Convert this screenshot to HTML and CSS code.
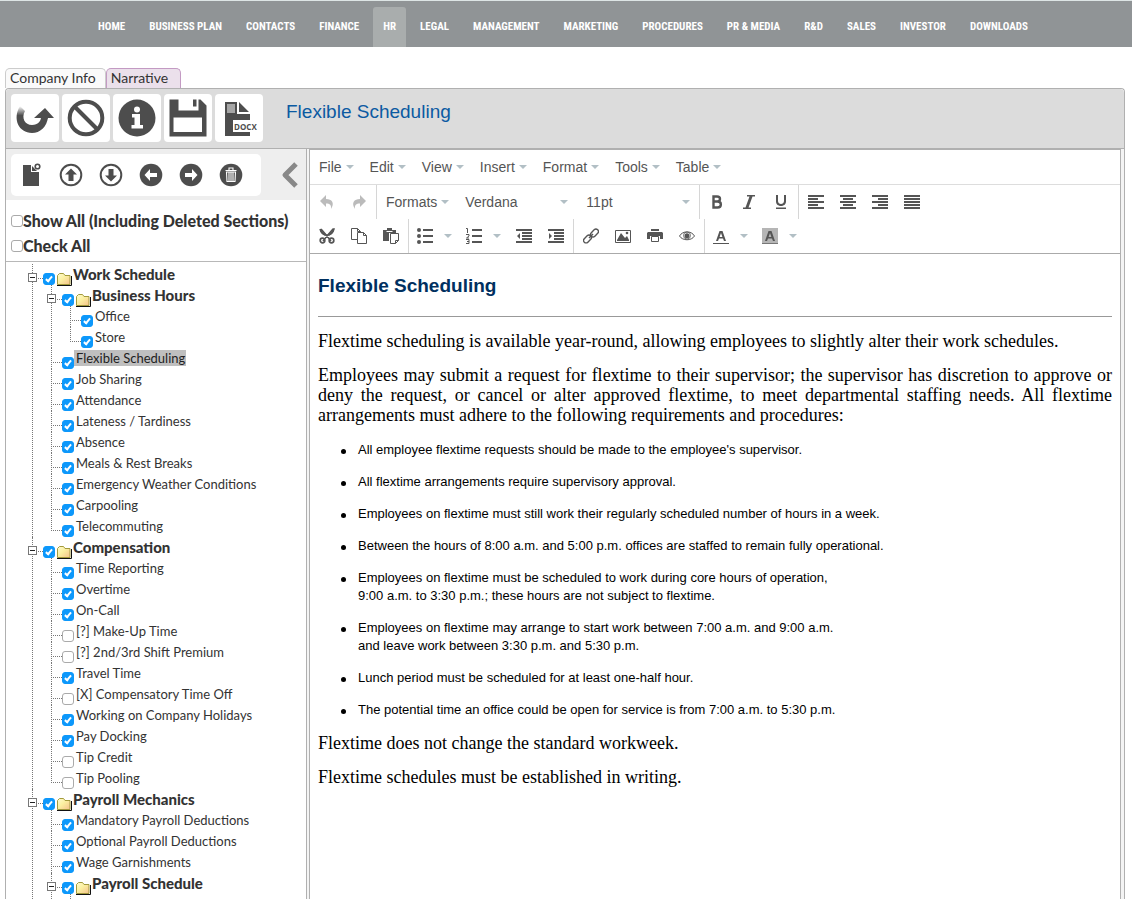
FILE: index.html
```
<!DOCTYPE html>
<html lang="en">
<head>
<meta charset="utf-8">
<title>Flexible Scheduling</title>
<link rel="stylesheet" href="styles.css">
</head>
<body>
<nav class="topnav">
  <a href="#">HOME</a><a href="#">BUSINESS PLAN</a><a href="#">CONTACTS</a><a href="#">FINANCE</a><a href="#" class="active">HR</a><a href="#">LEGAL</a><a href="#">MANAGEMENT</a><a href="#">MARKETING</a><a href="#">PROCEDURES</a><a href="#">PR &amp; MEDIA</a><a href="#">R&amp;D</a><a href="#">SALES</a><a href="#">INVESTOR</a><a href="#">DOWNLOADS</a>
</nav>
<main class="page">
  <div class="tabs"><a href="#" class="tab">Company Info</a><a href="#" class="tab current">Narrative</a></div>
  <div class="app">
    <header class="app-head">
      <button class="big" aria-label="Revert"><svg width="48" height="48" viewBox="0 0 48 48"><defs><linearGradient id="fade" x1="0" y1="0" x2="0" y2="1"><stop offset="0" stop-color="#4d4d4d" stop-opacity="0"/><stop offset=".35" stop-color="#4d4d4d"/></linearGradient></defs><path d="M9 12l5 5c-4 7 0 14 7 14 6 0 9-4 9-8h7c-1 10-8 16-16 16C8 39 1 25 9 12z" fill="url(#fade)"/><path d="M23 24l11-10 9 10h-6l-2 3h-5v-3z" fill="#4d4d4d"/></svg></button>
      <button class="big" aria-label="Cancel"><svg width="48" height="48" viewBox="0 0 48 48" fill="none" stroke="#4d4d4d" stroke-width="4"><circle cx="24" cy="24" r="16.300"/><path d="M12.500 12.500l23 23"/></svg></button>
      <button class="big" aria-label="Information"><svg width="48" height="48" viewBox="0 0 48 48"><circle cx="24" cy="24" r="18.500" fill="#4d4d4d"/><circle cx="24" cy="15.500" r="3" fill="#fff"/><path d="M19 20h8v11h3v3.500H18.500V31h3v-7.500H19z" fill="#fff"/></svg></button>
      <button class="big" aria-label="Save"><svg width="48" height="48" viewBox="0 0 48 48"><path d="M5.500 5.500h9v11h20v-11h2l6 6v31h-37z" fill="#4d4d4d"/><path d="M29 5.500h3.500v7H29z" fill="#4d4d4d"/><path d="M9.500 23.500h28.500v14.500H9.500z" fill="#fff"/></svg></button>
      <button class="big" aria-label="Export DOCX"><svg width="48" height="48" viewBox="0 0 48 48"><path d="M10 8h12v12h13v6H18v12h17v4H10zM24 8l10 10H24z" fill="#4d4d4d"/><path d="M12 10h8v9h-8z" fill="#a6a6a6"/><text x="19" y="36" class="docx">DOCX</text></svg></button>
      <h1>Flexible Scheduling</h1>
    </header>
    <div class="panes">
      <aside class="side">
        <div class="side-bar">
          <div class="side-tools">
            <button aria-label="Add section"><svg width="24" height="24" viewBox="0 0 24 24"><path d="M4 2h8v7h8v14H4z" fill="#4d4d4d"/><path d="M13 3l5 5h-5z" fill="#4d4d4d"/><circle cx="18.500" cy="3.500" r="2.300" fill="#fff" stroke="#4d4d4d" stroke-width="1.600"/></svg></button>
            <button aria-label="Move up"><svg width="24" height="24" viewBox="0 0 24 24"><circle cx="12" cy="12" r="10.300" fill="none" stroke="#4d4d4d" stroke-width="2"/><path d="M12 5.500l6 6h-3.500V18h-5v-6.500H6z" fill="#4d4d4d"/></svg></button>
            <button aria-label="Move down"><svg width="24" height="24" viewBox="0 0 24 24"><circle cx="12" cy="12" r="10.300" fill="none" stroke="#4d4d4d" stroke-width="2"/><path d="M12 18.500l6-6h-3.500V6h-5v6.500H6z" fill="#4d4d4d"/></svg></button>
            <button aria-label="Move left"><svg width="24" height="24" viewBox="0 0 24 24"><circle cx="12" cy="12" r="11.300" fill="#4d4d4d"/><path d="M5.500 12l5.500-6v4h7v4h-7v4z" fill="#fff"/></svg></button>
            <button aria-label="Move right"><svg width="24" height="24" viewBox="0 0 24 24"><circle cx="12" cy="12" r="11.300" fill="#4d4d4d"/><path d="M18.500 12l-5.500-6v4H6v4h7v4z" fill="#fff"/></svg></button>
            <button aria-label="Delete"><svg width="24" height="24" viewBox="0 0 24 24"><circle cx="12" cy="12" r="11.300" fill="#4d4d4d"/><path d="M7.500 9h9l-.5 9.500H8zM6.500 7.500h11M10 7V5h4v2M10 9v9M12 9v9M14 9v9" fill="none" stroke="#fff" stroke-width="1.100"/></svg></button>
          </div>
          <button class="collapse" aria-label="Collapse sidebar"><svg width="18" height="28" viewBox="0 0 18 28"><path d="M15 3L4 14l11 11" fill="none" stroke="#888" stroke-width="5" stroke-linejoin="round"/></svg></button>
        </div>
        <div class="filters">
          <label><input type="checkbox">Show All (Including Deleted Sections)</label>
          <label><input type="checkbox">Check All</label>
        </div>
        <svg class="defs" width="0" height="0"><defs>
          <linearGradient id="paper" x1="0" y1="0" x2="1" y2="1"><stop offset="0" stop-color="#fffbd0"/><stop offset=".45" stop-color="#fbf0a0"/><stop offset="1" stop-color="#f4c08c"/></linearGradient>
          <symbol id="folder" viewBox="0 0 16 14"><path d="M1.500 12.500v-9l2-2h4l1.500 2h5v9z" fill="url(#paper)" stroke="#a39a3c"/><path d="M1 13.500h14.500V4" fill="none" stroke="#111"/></symbol>
        </defs></svg>
        <ul class="tree">
          <li><div class="row"><button class="toggle" aria-label="Collapse"></button><label><input type="checkbox" checked><svg class="folder"><use href="#folder"/></svg><b>Work Schedule</b></label></div>
            <ul>
              <li><div class="row"><button class="toggle" aria-label="Collapse"></button><label><input type="checkbox" checked><svg class="folder"><use href="#folder"/></svg><b>Business Hours</b></label></div>
                <ul>
                  <li><div class="row"><label><input type="checkbox" checked><span>Office</span></label></div></li>
                  <li><div class="row"><label><input type="checkbox" checked><span>Store</span></label></div></li>
                </ul>
              </li>
              <li><div class="row"><label><input type="checkbox" checked><span class="selected">Flexible Scheduling</span></label></div></li>
              <li><div class="row"><label><input type="checkbox" checked><span>Job Sharing</span></label></div></li>
              <li><div class="row"><label><input type="checkbox" checked><span>Attendance</span></label></div></li>
              <li><div class="row"><label><input type="checkbox" checked><span>Lateness / Tardiness</span></label></div></li>
              <li><div class="row"><label><input type="checkbox" checked><span>Absence</span></label></div></li>
              <li><div class="row"><label><input type="checkbox" checked><span>Meals &amp; Rest Breaks</span></label></div></li>
              <li><div class="row"><label><input type="checkbox" checked><span>Emergency Weather Conditions</span></label></div></li>
              <li><div class="row"><label><input type="checkbox" checked><span>Carpooling</span></label></div></li>
              <li><div class="row"><label><input type="checkbox" checked><span>Telecommuting</span></label></div></li>
            </ul>
          </li>
          <li><div class="row"><button class="toggle" aria-label="Collapse"></button><label><input type="checkbox" checked><svg class="folder"><use href="#folder"/></svg><b>Compensation</b></label></div>
            <ul>
              <li><div class="row"><label><input type="checkbox" checked><span>Time Reporting</span></label></div></li>
              <li><div class="row"><label><input type="checkbox" checked><span>Overtime</span></label></div></li>
              <li><div class="row"><label><input type="checkbox" checked><span>On-Call</span></label></div></li>
              <li><div class="row"><label><input type="checkbox"><span>[?] Make-Up Time</span></label></div></li>
              <li><div class="row"><label><input type="checkbox"><span>[?] 2nd/3rd Shift Premium</span></label></div></li>
              <li><div class="row"><label><input type="checkbox" checked><span>Travel Time</span></label></div></li>
              <li><div class="row"><label><input type="checkbox"><span>[X] Compensatory Time Off</span></label></div></li>
              <li><div class="row"><label><input type="checkbox" checked><span>Working on Company Holidays</span></label></div></li>
              <li><div class="row"><label><input type="checkbox" checked><span>Pay Docking</span></label></div></li>
              <li><div class="row"><label><input type="checkbox"><span>Tip Credit</span></label></div></li>
              <li><div class="row"><label><input type="checkbox"><span>Tip Pooling</span></label></div></li>
            </ul>
          </li>
          <li class="more"><div class="row"><button class="toggle" aria-label="Collapse"></button><label><input type="checkbox" checked><svg class="folder"><use href="#folder"/></svg><b>Payroll Mechanics</b></label></div>
            <ul>
              <li><div class="row"><label><input type="checkbox" checked><span>Mandatory Payroll Deductions</span></label></div></li>
              <li><div class="row"><label><input type="checkbox" checked><span>Optional Payroll Deductions</span></label></div></li>
              <li><div class="row"><label><input type="checkbox" checked><span>Wage Garnishments</span></label></div></li>
              <li class="more"><div class="row"><button class="toggle" aria-label="Collapse"></button><label><input type="checkbox" checked><svg class="folder"><use href="#folder"/></svg><b>Payroll Schedule</b></label></div>
                <ul><li class="more"><div class="row"></div></li></ul>
              </li>
            </ul>
          </li>
        </ul>
      </aside>
      <section class="editor">
        <div class="menubar">
          <button>File<i class="caret"></i></button><button>Edit<i class="caret"></i></button><button>View<i class="caret"></i></button><button>Insert<i class="caret"></i></button><button>Format<i class="caret"></i></button><button>Tools<i class="caret"></i></button><button>Table<i class="caret"></i></button>
        </div>
        <div class="toolbar">
          <div class="set">
            <button class="tool faint" aria-label="Undo"><svg viewBox="0 0 16 16"><path d="M7 1v4c6 0 9 4 5 10 .5-4-1-5.500-5-5.500V13L1 7z"/></svg></button>
            <button class="tool faint" aria-label="Redo"><svg viewBox="0 0 16 16"><path d="M9 1v4C3 5 0 9 4 15c-.5-4 1-5.500 5-5.500V13l6-6z"/></svg></button>
          </div>
          <div class="set">
            <button class="pick">Formats<i class="caret"></i></button>
            <button class="pick font">Verdana<i class="caret"></i></button>
            <button class="pick size">11pt<i class="caret"></i></button>
          </div>
          <div class="set">
            <button class="tool" aria-label="Bold"><svg viewBox="0 0 16 16"><path d="M4.500 2.500H8c4 0 4 5 0 5H4.500zm0 5h4c4.500 0 4.500 6 0 6h-4z" fill="none" stroke="#555" stroke-width="2.400"/></svg></button>
            <button class="tool" aria-label="Italic"><svg viewBox="0 0 16 16"><path d="M6 1h8v1.500h-2.500L7.500 13.500H10V15H2v-1.500h2.500L8.500 2.500H6z"/></svg></button>
            <button class="tool" aria-label="Underline"><svg viewBox="0 0 16 16"><path d="M3 1h2v6c0 4 6 4 6 0V1h2v6.500c0 6-10 6-10 0zM3 13.500h10V15H3z"/></svg></button>
          </div>
          <div class="set">
            <button class="tool" aria-label="Align left"><svg viewBox="0 0 16 16"><path d="M0 1h16v2H0zm0 3h10v2H0zm0 3h16v2H0zm0 3h10v2H0zm0 3h16v2H0z"/></svg></button>
            <button class="tool" aria-label="Align center"><svg viewBox="0 0 16 16"><path d="M0 1h16v2H0zm3 3h10v2H3zM0 7h16v2H0zm3 3h10v2H3zm-3 3h16v2H0z"/></svg></button>
            <button class="tool" aria-label="Align right"><svg viewBox="0 0 16 16"><path d="M0 1h16v2H0zm6 3h10v2H6zM0 7h16v2H0zm6 3h10v2H6zm-6 3h16v2H0z"/></svg></button>
            <button class="tool" aria-label="Justify"><svg viewBox="0 0 16 16"><path d="M0 1h16v2H0zm0 3h16v2H0zm0 3h16v2H0zm0 3h16v2H0zm0 3h16v2H0z"/></svg></button>
          </div>
        </div>
        <div class="toolbar">
          <div class="set">
            <button class="tool" aria-label="Cut"><svg viewBox="0 0 16 16"><path d="M1 1c1 4 4 6 7 6s6-2 7-6l-1 0C12 3 4 13 4 13M2 1c2 2 10 12 10 12" fill="none" stroke="#555" stroke-width="1.500"/><path d="M1 1c0 4 4 7 7 7s7-3 7-7L8 7z"/><circle cx="3.500" cy="12.500" r="2.300" fill="none" stroke="#555" stroke-width="1.700"/><circle cx="12.500" cy="12.500" r="2.300" fill="none" stroke="#555" stroke-width="1.700"/></svg></button>
            <button class="tool" aria-label="Copy"><svg viewBox="0 0 16 16"><path d="M6 11.500H.5v-11h6l3 3V5M6.500.5v3h3M6.500 4.500h6l3 3v8h-9zM12.500 4.500v3h3" fill="none" stroke="#555"/></svg></button>
            <button class="tool" aria-label="Paste"><svg viewBox="0 0 16 16"><path d="M0 2h4V0h5v2h4v3H6v8H0z"/><path d="M3.500 3.500h6" stroke="#fff"/><path d="M7.500 5.500h8v7l-3 3h-5zM15.500 12.500h-3v3" fill="#fff" stroke="#555"/></svg></button>
          </div>
          <div class="set">
            <button class="tool split" aria-label="Bullet list"><svg viewBox="0 0 16 16"><circle cx="2" cy="2" r="2"/><circle cx="2" cy="8" r="2"/><circle cx="2" cy="14" r="2"/><path d="M6 1h10v2H6zm0 6h10v2H6zm0 6h10v2H6z"/></svg><i class="caret"></i></button>
            <button class="tool split" aria-label="Numbered list"><svg viewBox="0 0 16 16"><path d="M6 1h10v2H6zm0 6h10v2H6zm0 6h10v2H6z"/><path d="M0 .5h1.500V5M0 6.500h3v1.500L.5 10H3M0 11.500h3v4H0M1 13.500h2" fill="none" stroke="#555"/></svg><i class="caret"></i></button>
            <button class="tool" aria-label="Outdent"><svg viewBox="0 0 16 16"><path d="M0 1h16v2H0zm6 3h10v2H6zm0 3h10v2H6zm0 3h10v2H6zm-6 3h16v2H0zM4 5v6L1 8z"/></svg></button>
            <button class="tool" aria-label="Indent"><svg viewBox="0 0 16 16"><path d="M0 1h16v2H0zm6 3h10v2H6zm0 3h10v2H6zm0 3h10v2H6zm-6 3h16v2H0zM1 5v6l3-3z"/></svg></button>
          </div>
          <div class="set">
            <button class="tool" aria-label="Link"><svg viewBox="0 0 16 16"><g fill="none" stroke="#555" stroke-width="1.400"><rect x="7" y="2.500" width="9" height="5" rx="2.500" transform="rotate(-45 11.500 5)"/><rect x="0" y="8.500" width="9" height="5" rx="2.500" transform="rotate(-45 4.500 11)"/><path d="M6 10l4-4"/></g></svg></button>
            <button class="tool" aria-label="Image"><svg viewBox="0 0 16 16"><path d="M.5 2.500h15v12H.5z" fill="none" stroke="#555"/><path d="M2 12l4-7 4 5 2-2 2 4v1H2z"/><circle cx="12" cy="5" r="1.300"/></svg></button>
            <button class="tool" aria-label="Print"><svg viewBox="0 0 16 16"><path d="M4 1h8v2H4zM1 4h14l1 1v6h-3V8H3v3H0V5z"/><path d="M4.500 8.500h7v5h-7z" fill="none" stroke="#555"/></svg></button>
            <button class="tool" aria-label="Preview"><svg viewBox="0 0 16 16"><path d="M.5 8C3.500 2.500 12.500 2.500 15.500 8c-3 5-12 5-15 0z" fill="none" stroke="#555"/><circle cx="8" cy="7.800" r="2.500"/><circle cx="8" cy="7.500" r="3.500" fill="none" stroke="#555" stroke-width=".8"/></svg></button>
          </div>
          <div class="set">
            <button class="tool split" aria-label="Text color"><svg viewBox="0 0 16 16"><path d="M6.500 3h3L13 13h-2l-1-2.500H6L5 13H3zM8 5L6.600 9h2.800zM0 15h16v1H0z"/></svg><i class="caret"></i></button>
            <button class="tool split" aria-label="Background color"><svg viewBox="0 0 16 16"><path d="M0 0h16v16H0z" fill="#b5b5b5"/><path d="M6.500 3h3L13 13h-2l-1-2.500H6L5 13H3zM8 5L6.600 9h2.800z"/><path d="M0 15h16v1H0z" fill="#777"/></svg><i class="caret"></i></button>
          </div>
        </div>
        <article class="doc">
          <h2>Flexible Scheduling</h2>
          <hr>
          <p>Flextime scheduling is available year-round, allowing employees to slightly alter their work schedules.</p>
          <p class="justify">Employees may submit a request for flextime to their supervisor; the supervisor has discretion to approve or deny the request, or cancel or alter approved flextime, to meet departmental staffing needs. All flextime arrangements must adhere to the following requirements and procedures:</p>
          <ul>
            <li><span>All employee flextime requests should be made to the employee's supervisor.</span></li>
            <li><span>All flextime arrangements require supervisory approval.</span></li>
            <li><span>Employees on flextime must still work their regularly scheduled number of hours in a week.</span></li>
            <li><span>Between the hours of 8:00 a.m. and 5:00 p.m. offices are staffed to remain fully operational.</span></li>
            <li><span>Employees on flextime must be scheduled to work during core hours of operation,<br>9:00 a.m. to 3:30 p.m.; these hours are not subject to flextime.</span></li>
            <li><span>Employees on flextime may arrange to start work between 7:00 a.m. and 9:00 a.m.<br>and leave work between 3:30 p.m. and 5:30 p.m.</span></li>
            <li><span>Lunch period must be scheduled for at least one-half hour.</span></li>
            <li><span>The potential time an office could be open for service is from 7:00 a.m. to 5:30 p.m.</span></li>
          </ul>
          <p>Flextime does not change the standard workweek.</p>
          <p>Flextime schedules must be established in writing.</p>
        </article>
      </section>
    </div>
  </div>
</main>
</body>
</html>
```

FILE: styles.css
```
* { box-sizing: border-box; }
body {
  margin: 0;
  height: 100vh;
  overflow: hidden;
  display: flex;
  flex-direction: column;
  background: #fff;
  font-family: Lato, sans-serif;
  color: #333;
}
button {
  border: 0;
  padding: 0;
  margin: 0;
  background: none;
  font: inherit;
  color: inherit;
  display: flex;
  align-items: center;
  justify-content: center;
}
svg { display: block; flex: none; }

.topnav {
  flex: none;
  height: 47px;
  display: flex;
  justify-content: center;
  align-items: flex-end;
  gap: 4px;
  padding-right: 6px;
  background: #909496;
  border-top: 1px solid #dde5e5;
}
.topnav a {
  height: 40px;
  padding: 0 10px;
  font: bold 11px/40px "Roboto Condensed", "Liberation Sans Narrow", "Liberation Sans", sans-serif;
  color: #fff;
  text-decoration: none;
  white-space: nowrap;
}
.topnav .active { background: #a9adad; border-radius: 3px 3px 0 0; }

.page {
  flex: 1;
  min-height: 0;
  display: flex;
  flex-direction: column;
  padding: 21px 7px 0 5px;
}
.tabs { display: flex; flex: none; }
.tab {
  height: 20px;
  padding: 0 9px 0 4px;
  border: 1px solid #ccc;
  border-bottom: 0;
  border-radius: 5px 5px 0 0;
  font-size: 14px;
  line-height: 18px;
  color: #333;
  text-decoration: none;
  background: #fafafa;
}
.tab.current { padding-right: 12px; background: #ebe0eb; border-color: #c39ac3; }

.app {
  flex: 1;
  min-height: 0;
  display: flex;
  flex-direction: column;
  border: 1px solid #b0b0b0;
  border-bottom: 0;
  border-radius: 4px 4px 0 0;
}
.app-head {
  flex: none;
  display: flex;
  gap: 3px;
  padding: 5px;
  height: 60px;
  background: #dcdcdc;
  border-bottom: 1px solid #b0b0b0;
  border-radius: 4px 4px 0 0;
}
.big {
  width: 48px;
  height: 48px;
  background: #fff;
  border-radius: 4px;
}
.docx { font: bold 8px "Open Sans", sans-serif; fill: #4d4d4d; }
h1 {
  margin: 0 0 0 20px;
  font: 19px/36px "Liberation Sans", sans-serif;
  color: #0b5aa2;
}

.panes { flex: 1; min-height: 0; display: flex; gap: 2px; padding-right: 3px; background: #f4f4f4; }
.side {
  flex: 0 0 301px;
  display: flex;
  flex-direction: column;
  overflow: hidden;
  background: #fff;
  border-right: 1px solid #b0b0b0;
}
.side-bar {
  flex: none;
  height: 51px;
  display: flex;
  justify-content: space-between;
  align-items: center;
  padding: 0 7px 0 5px;
  background: #eee;
}
.side-tools {
  height: 42px;
  width: 250px;
  display: flex;
  align-items: center;
  gap: 16px;
  padding-left: 8px;
  background: #fff;
  border-radius: 5px;
}
.filters {
  flex: none;
  display: flex;
  flex-direction: column;
  padding: 8px 5px 3px;
  border-bottom: 1px solid #b8b8b8;
}
.filters label {
  display: flex;
  align-items: center;
  height: 25px;
  font-size: 16px;
  line-height: 20px;
  font-weight: 900;
  white-space: nowrap;
}
input[type="checkbox"] {
  appearance: none;
  flex: none;
  position: relative;
  margin: 0;
  width: 12px;
  height: 12px;
  border: 1px solid #aaa;
  border-radius: 3px;
  background: #fff;
}
input[type="checkbox"]:checked { background: #0d98fb; border-color: #0d98fb; }
input[type="checkbox"]:checked::after {
  content: "";
  position: absolute;
  left: 3px;
  top: 1px;
  width: 2px;
  height: 5px;
  border: solid #fff;
  border-width: 0 2px 2px 0;
  transform: rotate(40deg);
}

.defs { position: absolute; }
.tree, .tree ul { list-style: none; margin: 0; padding: 0; }
.tree { padding: 2px 0 0 26px; }
.tree ul { padding-left: 19px; }
.tree li { position: relative; }
.tree li::before {
  content: "";
  position: absolute;
  left: 0;
  top: 0;
  bottom: 0;
  border-left: 1px dotted #777;
}
.tree li:last-child::before { bottom: auto; height: 13px; }
.tree li.more::before { height: auto; bottom: 0; }
.row { position: relative; height: 21px; display: flex; }
.row::before {
  content: "";
  width: 11px;
  height: 14px;
  border-bottom: 1px dotted #777;
}
.toggle {
  position: absolute;
  left: -4px;
  top: 9px;
  width: 9px;
  height: 9px;
  border: 1px solid #777;
  background: #fff;
}
.toggle::after { content: ""; width: 5px; height: 1px; background: #222; }
.row label { display: flex; font-size: 13px; line-height: 16px; white-space: nowrap; }
.row input[type="checkbox"] { margin-top: 9px; }
.row span { height: 16px; margin-top: 2px; padding: 0 1px 0 2px; }
.row b { margin-top: 2px; padding-left: 1px; font-size: 15px; font-weight: 900; }
.folder { width: 16px; height: 14px; margin: 8px 0 0 1px; }
.selected { background: #bfbfbf; color: #222; }

.editor {
  flex: 1;
  min-width: 0;
  background: #fff;
  border: 1px solid #b0b0b0;
  border-bottom: 0;
  font-family: "Liberation Sans", sans-serif;
}
.menubar, .toolbar { display: flex; height: 34px; color: #555; font-size: 14px; }
.menubar { height: 35px; padding-left: 9px; gap: 16px; border-bottom: 1px solid #ddd; }
.menubar button, .pick { gap: 4px; }
.caret {
  border: 4px solid transparent;
  border-top-color: #b2bfc5;
  border-bottom: 0;
}
.toolbar + .doc { border-top: 1px solid #aaa; }
.set { display: flex; align-items: center; padding: 0 1px; }
.set + .set { border-left: 1px solid #d6d6d6; }
.tool { width: 32px; height: 32px; }
.tool svg { width: 16px; height: 16px; fill: #555; }
.tool.faint svg { fill: #bbb; }
.split { width: 49px; gap: 11px; }
.pick { padding: 0 8px; height: 32px; }
.font { width: 119px; justify-content: space-between; }
.size { width: 122px; padding-left: 10px; justify-content: space-between; }

.doc { padding: 20px 8px; color: #000; font: 18px/20px "Liberation Serif", serif; }
.doc h2 {
  margin: 0 0 18px;
  font: bold 19px/24px "Liberation Sans", sans-serif;
  color: #003060;
}
.doc hr { margin: 0 0 14px; border: 0; border-top: 1px solid #999; }
.doc p { margin: 0 0 14px; }
.justify { text-align: justify; }
.doc ul { margin: 16px 0 0; padding-left: 40px; font: 18px/18px "Liberation Sans", sans-serif; }
.doc li { margin-bottom: 14px; }
.doc li span { display: inline-block; vertical-align: top; font-size: 13px; line-height: 18px; }
```
